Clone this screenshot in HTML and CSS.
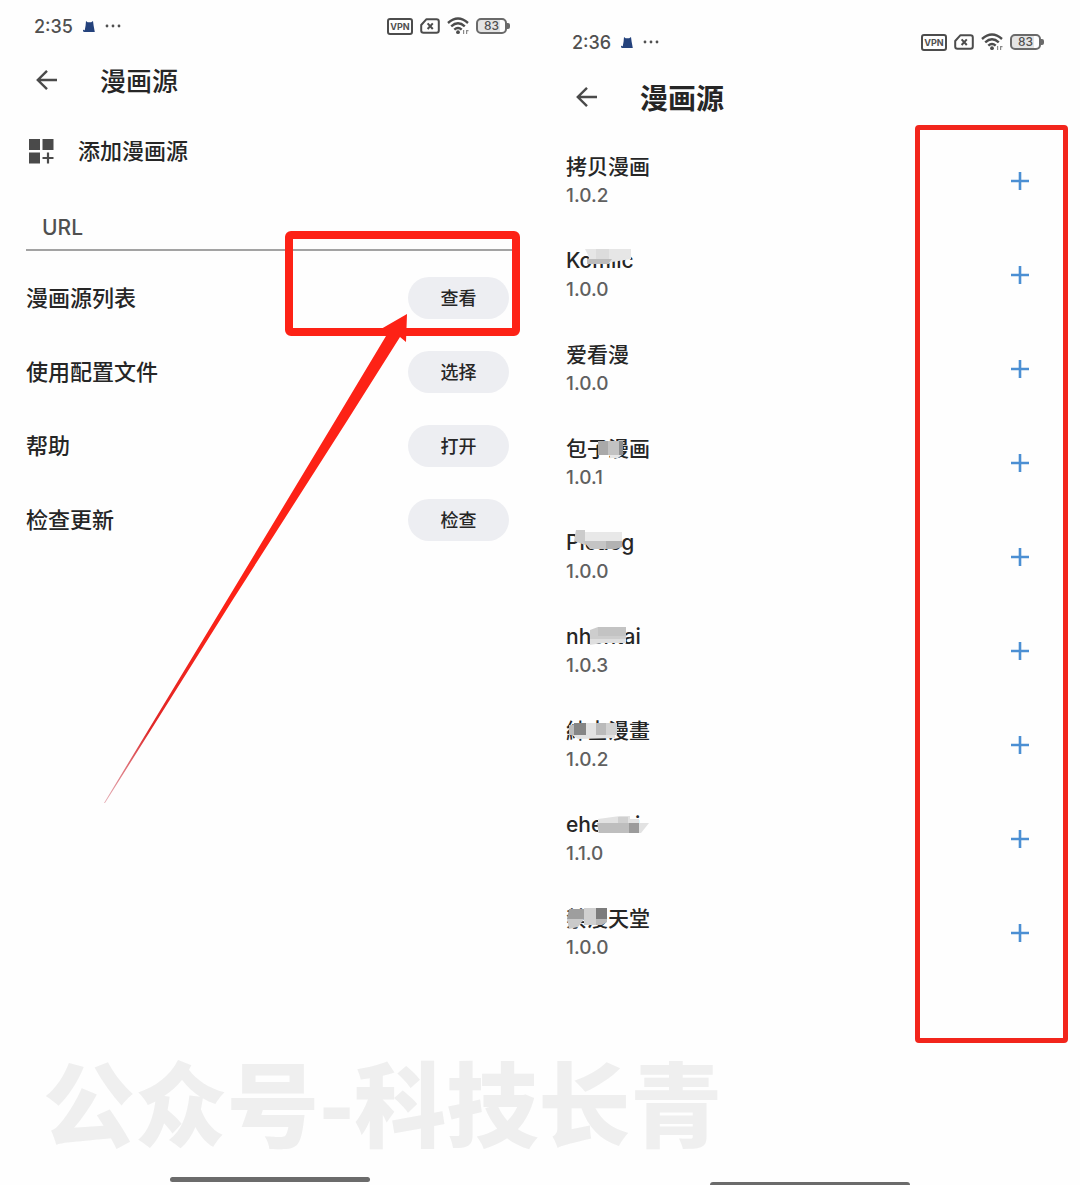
FILE: index.html
```
<!DOCTYPE html>
<html lang="zh-CN">
<head>
  <meta charset="UTF-8">
  <meta name="viewport" content="width=device-width, initial-scale=1.0">
  <title>漫画源</title>
  <link rel="stylesheet" href="styles.css">
</head>
<body>

  <!-- shared icons -->
  <svg class="sprite" aria-hidden="true">
    <symbol id="cat" viewBox="0 0 12 11">
      <path d="M3 0 L4.6 1.2 H8.2 L10 0 L10.6 4.5 L11.8 11 H1.4 Q-.4 11 .1 8.6 Q.8 9.6 1.8 9 L2.6 4.5 Z" fill="#24427c"/>
    </symbol>
    <symbol id="dots" viewBox="0 0 16 4">
      <circle cx="2" cy="2" r="1.4"/><circle cx="8" cy="2" r="1.4"/><circle cx="14" cy="2" r="1.4"/>
    </symbol>
    <symbol id="sim" viewBox="0 0 20 16">
      <path d="M6.5 1.2 H16.5 Q18.8 1.2 18.8 3.5 V12.5 Q18.8 14.8 16.5 14.8 H3.5 Q1.2 14.8 1.2 12.5 V7 Z" fill="none" stroke="#4c4c4c" stroke-width="2" stroke-linejoin="round"/>
      <path d="M7.6 5.3 L12.8 11 M12.8 5.3 L7.6 11" stroke="#4c4c4c" stroke-width="2"/>
    </symbol>
    <symbol id="wifi" viewBox="0 0 22 18">
      <g fill="none" stroke="#4c4c4c" stroke-width="2.4">
        <path d="M1 6 Q11 -2.8 21 6"/>
        <path d="M4.2 9.4 Q11 3.2 17.8 9.4"/>
        <path d="M7.3 12.6 Q11 9.2 14.7 12.6"/>
      </g>
      <circle cx="11" cy="15.2" r="1.9" fill="#4c4c4c"/>
      <path d="M16.6 13 V17 M19.6 13 V17 M19.6 13.6 H21.5" stroke="#8a8a8a" stroke-width="1.2"/>
    </symbol>
    <symbol id="back" viewBox="0 0 22 22">
      <path d="M21 11 H2 M11 1.8 L1.8 11 L11 20.2" fill="none" stroke="#4a4a4a" stroke-width="2.4"/>
    </symbol>
    <symbol id="plus" viewBox="0 0 20 20">
      <path d="M10 1 V19 M1 10 H19" stroke="#4b8fd3" stroke-width="2.6"/>
    </symbol>
  </svg>

  <main class="screens">

    <!-- settings screen -->
    <section class="phone">
      <div class="status-bar">
        <span class="clock">2:35</span>
        <svg class="cat"><use href="#cat"/></svg>
        <svg class="dots"><use href="#dots"/></svg>
        <div class="indicators">
          <span class="vpn">VPN</span>
          <svg class="sim"><use href="#sim"/></svg>
          <svg class="wifi"><use href="#wifi"/></svg>
          <span class="battery">83</span>
        </div>
      </div>

      <header class="app-bar">
        <button class="back" aria-label="返回"><svg><use href="#back"/></svg></button>
        <h1>漫画源</h1>
      </header>

      <div class="add-source">
        <svg viewBox="0 0 26 26">
          <path d="M1 1 H12 V12 H1 Z M14.5 1 H25.5 V12 H14.5 Z M1 14.5 H12 V25.5 H1 Z" fill="#4a4a4a"/>
          <path d="M20 14.5 V25.5 M14.5 20 H25.5" stroke="#4a4a4a" stroke-width="2.2"/>
        </svg>
        <h2>添加漫画源</h2>
      </div>

      <input class="url-input" type="url" placeholder="URL" aria-label="URL">

      <ul class="options">
        <li class="marked">
          <span>漫画源列表</span><button>查看</button>
          <div class="highlight"></div>
          <svg class="pointer" viewBox="0 0 304 490">
            <defs>
              <linearGradient id="fade" x1="0" y1="1" x2="1" y2="0">
                <stop offset="0" stop-color="#c33a4c" stop-opacity=".4"/>
                <stop offset=".15" stop-color="#e02828"/>
                <stop offset=".4" stop-color="#fd2216"/>
              </linearGradient>
            </defs>
            <path d="M0 489 L123 286 L231 107 L282 22 L277 15 L303 0 L302 28 L296 23 L243 107 L128 287 L1 489 Z" fill="url(#fade)"/>
          </svg>
        </li>
        <li><span>使用配置文件</span><button>选择</button></li>
        <li><span>帮助</span><button>打开</button></li>
        <li><span>检查更新</span><button>检查</button></li>
      </ul>

      <div class="home-bar"></div>
    </section>

    <!-- source list screen -->
    <section class="phone phone-list">
      <div class="status-bar">
        <span class="clock">2:36</span>
        <svg class="cat"><use href="#cat"/></svg>
        <svg class="dots"><use href="#dots"/></svg>
        <div class="indicators">
          <span class="vpn">VPN</span>
          <svg class="sim"><use href="#sim"/></svg>
          <svg class="wifi"><use href="#wifi"/></svg>
          <span class="battery">83</span>
        </div>
      </div>

      <header class="app-bar">
        <button class="back" aria-label="返回"><svg><use href="#back"/></svg></button>
        <h1>漫画源</h1>
      </header>

      <div class="source-wrap">
        <ul class="sources">
          <li>
            <div><h3>拷贝漫画</h3><p>1.0.2</p></div>
            <button aria-label="添加"><svg><use href="#plus"/></svg></button>
          </li>
          <li>
            <div>
              <h3>Komiic
                <svg class="mosaic" viewBox="0 0 88 28">
                  <path d="M19 2 H65 V12 L46 15 L42 17 H21 L23 10 Z" fill="#e6e6e6"/>
                  <path d="M30 2 H43 V12 H30 Z" fill="#dcdcdc"/>
                  <path d="M21 12 H46 L42 17 H21 Z" fill="#bdbdbd"/>
                </svg>
              </h3>
              <p>1.0.0</p>
            </div>
            <button aria-label="添加"><svg><use href="#plus"/></svg></button>
          </li>
          <li>
            <div><h3>爱看漫</h3><p>1.0.0</p></div>
            <button aria-label="添加"><svg><use href="#plus"/></svg></button>
          </li>
          <li>
            <div>
              <h3>包子漫画
                <svg class="mosaic" viewBox="0 0 88 28">
                  <path d="M32 6 H42 V20 H32 Z" fill="#a9a9a9"/>
                  <path d="M42 6 H53 V20 H42 Z" fill="#c2c2c2"/>
                  <path d="M53 6 H57 V20 H53 Z" fill="#8f8f8f"/>
                  <path d="M44 20 H56 L52 23 H44 Z" fill="#e6e6e6"/>
                </svg>
              </h3>
              <p>1.0.1</p>
            </div>
            <button aria-label="添加"><svg><use href="#plus"/></svg></button>
          </li>
          <li>
            <div>
              <h3>Picacg
                <svg class="mosaic" viewBox="0 0 88 28">
                  <path d="M10 1 H19 V16 L8 12 Z" fill="#cbcbcb"/>
                  <path d="M19 3 H56 V13 H19 Z" fill="#e8e8e8"/>
                  <path d="M17 12 H40 V20 H24 Z" fill="#c4c4c4"/>
                  <path d="M40 12 H56 V18 L50 20 H40 Z" fill="#b2b2b2"/>
                </svg>
              </h3>
              <p>1.0.0</p>
            </div>
            <button aria-label="添加"><svg><use href="#plus"/></svg></button>
          </li>
          <li>
            <div>
              <h3>nhentai
                <svg class="mosaic" viewBox="0 0 88 28">
                  <path d="M24 7 L32 4 H60 V16 H24 Z" fill="#cdcdcd"/>
                  <path d="M32 4 H60 V13 H32 Z" fill="#c3c3c3"/>
                  <path d="M24 16 H60 V20 L36 20 L24 22 Z" fill="#dfdfdf"/>
                </svg>
              </h3>
              <p>1.0.3</p>
            </div>
            <button aria-label="添加"><svg><use href="#plus"/></svg></button>
          </li>
          <li>
            <div>
              <h3>紳士漫畫
                <svg class="mosaic" viewBox="0 0 88 28">
                  <path d="M3 8 H8 V18 H3 Z" fill="#bcbcbc"/>
                  <path d="M8 6 H20 V18 H8 Z" fill="#858585"/>
                  <path d="M20 6 H30 V21 H20 Z" fill="#e2e2e2"/>
                  <path d="M30 6 H40 V18 H30 Z" fill="#bababa"/>
                  <path d="M40 6 H51 V18 H40 Z" fill="#d2d2d2"/>
                  <path d="M6 18 H49 V21 L12 22 Z" fill="#e2e2e2"/>
                </svg>
              </h3>
              <p>1.0.2</p>
            </div>
            <button aria-label="添加"><svg><use href="#plus"/></svg></button>
          </li>
          <li>
            <div>
              <h3>ehentai
                <svg class="mosaic" viewBox="0 0 88 28">
                  <path d="M32 8 L54 5 H64 V8 H73 V12 H83 L75 22 H32 Z" fill="#e2e2e2"/>
                  <path d="M52 6 H62 V12 H52 Z" fill="#d0d0d0"/>
                  <path d="M31 12 H63 V22 H33 Z" fill="#bebebe"/>
                  <path d="M63 12 H73 V22 H63 Z" fill="#9b9b9b"/>
                </svg>
              </h3>
              <p>1.1.0</p>
            </div>
            <button aria-label="添加"><svg><use href="#plus"/></svg></button>
          </li>
          <li>
            <div>
              <h3>禁漫天堂
                <svg class="mosaic" viewBox="0 0 88 28">
                  <path d="M3 4 H18 V14 H1 Z" fill="#9e9e9e"/>
                  <path d="M18 3 H30 V20 H18 Z" fill="#d0d0d0"/>
                  <path d="M30 3 H41 V14 H30 Z" fill="#7c7c7c"/>
                  <path d="M30 14 H41 V17 L36 20 H30 Z" fill="#b9b9b9"/>
                  <path d="M1 14 H18 L12 22 L3 24 Z" fill="#cacaca"/>
                </svg>
              </h3>
              <p>1.0.0</p>
            </div>
            <button aria-label="添加"><svg><use href="#plus"/></svg></button>
          </li>
        </ul>
        <div class="highlight"></div>
      </div>

      <div class="home-bar"></div>
    </section>

    <div class="watermark">公众号-科技长青</div>
  </main>

</body>
</html>
```
FILE: styles.css
```
* {
  box-sizing: border-box;
}

body {
  margin: 0;
  background: #fefefe;
  color: #262626;
  font-family: Inter, "Noto Sans CJK SC", sans-serif;
  font-size: 22px;
  font-weight: 500;
  line-height: 28px;
}

h1, h2, h3, p, ul {
  margin: 0;
  padding: 0;
}

ul {
  list-style: none;
}

button {
  border: none;
  background: none;
  padding: 0;
  color: inherit;
  font: inherit;
  cursor: pointer;
}

svg {
  display: block;
}

.sprite {
  position: absolute;
  width: 0;
  height: 0;
}

.screens {
  position: relative;
  display: grid;
  grid-template-columns: 1fr 1fr;
  min-height: 100vh;
}

.phone {
  display: flex;
  flex-direction: column;
  padding-top: 8px;
}

.phone-list {
  padding-top: 24px;
}

/* status bar */
.status-bar {
  display: flex;
  align-items: center;
  height: 36px;
  padding: 0 30px 0 34px;
  color: #505050;
  fill: #505050;
}

.phone-list .status-bar {
  padding: 0 36px 0 32px;
}

.clock {
  padding-top: 2px;
  font-size: 18px;
}

.cat {
  width: 12px;
  height: 11px;
  margin: 0 10px;
}

.dots {
  width: 16px;
  height: 4px;
}

.indicators {
  display: flex;
  align-items: center;
  gap: 7px;
  margin-left: auto;
}

.vpn {
  width: 26px;
  height: 17px;
  border: 2px solid #4c4c4c;
  border-radius: 3px;
  font-size: 9px;
  font-weight: 700;
  line-height: 13px;
  text-align: center;
}

.sim {
  width: 20px;
  height: 16px;
}

.wifi {
  width: 22px;
  height: 18px;
}

.battery {
  position: relative;
  width: 31px;
  height: 16px;
  margin-right: 3px;
  border: 2px solid #6a6a6a;
  border-radius: 5px;
  background: linear-gradient(90deg, #e4e4e4 80%, #fefefe 80%);
  font-size: 12px;
  line-height: 12px;
  text-align: center;
}

.battery::after {
  content: "";
  position: absolute;
  top: 3px;
  right: -5px;
  width: 3px;
  height: 6px;
  border-radius: 0 2px 2px 0;
  background: #6a6a6a;
}

/* title row */
.app-bar {
  display: flex;
  align-items: center;
  gap: 42px;
  height: 72px;
  padding-left: 36px;
}

.phone-list .app-bar {
  height: 74px;
}

.back svg {
  width: 22px;
  height: 22px;
}

.app-bar h1 {
  padding-top: 3px;
  font-size: 26px;
  font-weight: 500;
}

.phone-list h1 {
  font-size: 28px;
  font-weight: 600;
}

/* settings */
.add-source {
  display: flex;
  align-items: center;
  gap: 24px;
  height: 70px;
  padding-left: 28px;
}

.add-source svg {
  width: 26px;
  height: 26px;
}

.add-source h2 {
  font-size: 22px;
  font-weight: 500;
}

.url-input {
  height: 46px;
  margin: 19px 26px 0;
  padding: 0 16px;
  border: none;
  border-bottom: 2px solid #a3a3a3;
  border-radius: 0;
  outline: none;
  background: none;
  font: inherit;
  font-size: 21px;
}

.url-input::placeholder {
  color: #505050;
  opacity: 1;
}

.options {
  margin-top: 10px;
}

.options li {
  display: flex;
  align-items: center;
  justify-content: space-between;
  height: 74px;
  padding: 0 31px 0 26px;
}

.options button {
  width: 101px;
  height: 42px;
  padding-top: 2px;
  border-radius: 21px;
  background: #edeef2;
  font-size: 18px;
}

.marked {
  position: relative;
}

.highlight {
  position: absolute;
  pointer-events: none;
}

.marked .highlight {
  top: -30px;
  right: 20px;
  width: 235px;
  height: 105px;
  border: 8px solid #fd2216;
  border-radius: 6px;
}

.pointer {
  position: absolute;
  top: 53px;
  right: 132px;
  width: 304px;
  height: 490px;
  pointer-events: none;
}

/* source list */
.source-wrap {
  position: relative;
}

.source-wrap .highlight {
  top: -9px;
  right: 12px;
  bottom: -63px;
  width: 153px;
  border: 5px solid #f2251c;
  border-radius: 4px;
}

.sources li {
  display: flex;
  align-items: center;
  justify-content: space-between;
  height: 94px;
  padding: 0 50px 0 26px;
}

.sources h3 {
  position: relative;
  font-size: 21px;
  font-weight: 500;
}

.sources p {
  padding-top: 1px;
  color: #606060;
  font-size: 19px;
}

.sources button svg {
  width: 20px;
  height: 20px;
}

.mosaic {
  position: absolute;
  top: 0;
  left: 0;
  width: 88px;
  height: 28px;
}

.home-bar {
  width: 200px;
  height: 5px;
  margin: auto auto 3px;
  border-radius: 3px;
  background: #6b6b6b;
}

.phone-list .home-bar {
  height: 3px;
  margin-bottom: 0;
  border-radius: 3px 3px 0 0;
}

.watermark {
  position: absolute;
  left: 43px;
  bottom: 30px;
  color: #efefef;
  font-family: "Noto Sans CJK SC", sans-serif;
  font-size: 92px;
  font-weight: 900;
  line-height: 110px;
  white-space: nowrap;
  pointer-events: none;
}
```
